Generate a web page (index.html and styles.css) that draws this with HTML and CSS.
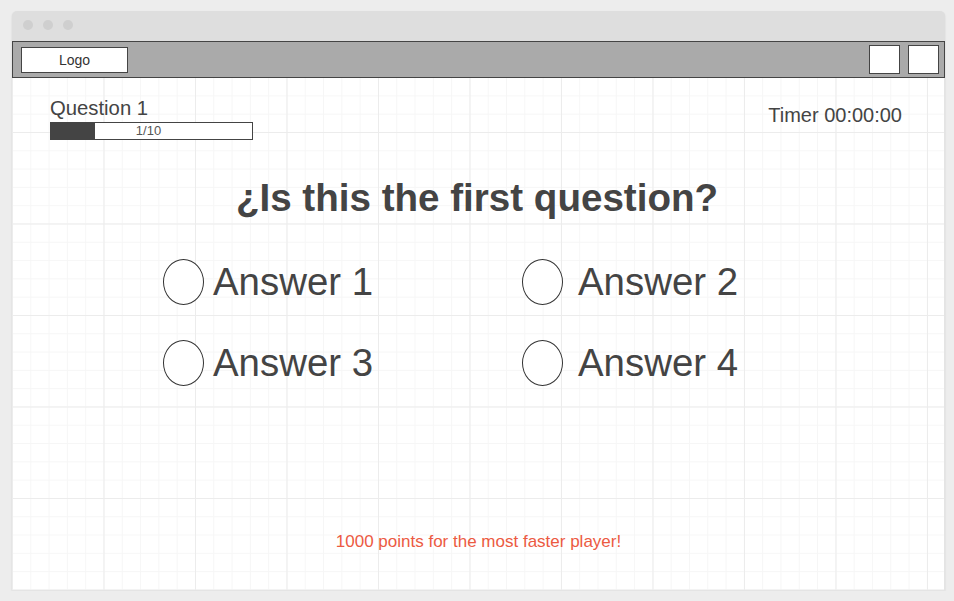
FILE: index.html
```html
<!DOCTYPE html>
<html lang="en">
<head>
<meta charset="utf-8">
<title>Quiz wireframe</title>
<link rel="stylesheet" href="styles.css">
</head>
<body>
<div class="window">
  <div class="titlebar">
    <span class="dot"></span><span class="dot"></span><span class="dot"></span>
  </div>
  <div class="navbar">
    <div class="logo">Logo</div>
    <div class="nav-actions">
      <div class="nav-box"></div>
      <div class="nav-box"></div>
    </div>
  </div>
  <div class="content">
    <div class="header">
      <div class="question-info">
        <div class="question-label">Question 1</div>
        <div class="progress">
          <div class="progress-fill" style="width: 22%"></div>
          <span class="progress-text">1/10</span>
        </div>
      </div>
      <div class="timer">Timer 00:00:00</div>
    </div>
    <h1 class="title">¿Is this the first question?</h1>
    <div class="answers">
      <div class="answer"><span class="radio"></span><span class="answer-label">Answer 1</span></div>
      <div class="answer answer-right"><span class="radio"></span><span class="answer-label">Answer 2</span></div>
      <div class="answer"><span class="radio"></span><span class="answer-label">Answer 3</span></div>
      <div class="answer answer-right"><span class="radio"></span><span class="answer-label">Answer 4</span></div>
    </div>
    <div class="footer">1000 points for the most faster player!</div>
  </div>
</div>
</body>
</html>
```
FILE: styles.css
```css
* { box-sizing: border-box; }
html, body { margin: 0; padding: 0; }
body {
  background: #ededed;
  font-family: "Liberation Sans", Arial, sans-serif;
  color: #444;
}
.window {
  margin: 11px 0 0 12px;
  width: 933px;
  height: 580px;
  background: #dedede;
  border-radius: 5px 5px 0 0;
  box-shadow: 0 1px 2px rgba(0,0,0,0.12);
  display: flex;
  flex-direction: column;
}
.titlebar {
  height: 30px;
  display: flex;
  align-items: flex-start;
  gap: 10px;
  padding: 9px 0 0 11px;
}
.dot {
  width: 10px;
  height: 10px;
  border-radius: 50%;
  background: #cfcfcf;
}
.navbar {
  height: 37px;
  background: #aaaaaa;
  border: 1px solid #444;
  display: flex;
  align-items: center;
  justify-content: space-between;
  padding: 0 5px 0 8px;
}
.logo {
  width: 107px;
  height: 26px;
  background: #fff;
  border: 1px solid #444;
  font-size: 14px;
  line-height: 24px;
  text-align: center;
  color: #333;
}
.nav-actions { display: flex; gap: 8px; }
.nav-box {
  width: 31px;
  height: 29px;
  background: #fff;
  border: 1px solid #444;
}
.content {
  flex: 1;
  display: flex;
  flex-direction: column;
  background-color: #fff;
  background-image:
    linear-gradient(to right, #ececec 1px, transparent 1px),
    linear-gradient(to bottom, #ececec 1px, transparent 1px),
    linear-gradient(to right, #f6f6f6 1px, transparent 1px),
    linear-gradient(to bottom, #f6f6f6 1px, transparent 1px);
  background-size: 91.5px 91.5px, 91.5px 91.5px, 18.3px 18.3px, 18.3px 18.3px;
  background-position: 0 54px, 0 54px, 0 54px, 0 54px;
  box-shadow: inset -1px 0 0 #e4e4e4, inset 0 -1px 0 #e4e4e4;
}
.header {
  display: flex;
  justify-content: space-between;
  align-items: flex-start;
  padding: 20px 43px 0 38px;
}
.question-label {
  font-size: 20.3px;
  line-height: 20px;
}
.progress {
  position: relative;
  margin-top: 4px;
  width: 203px;
  height: 18px;
  border: 1px solid #444;
  background: #fff;
}
.progress-fill {
  height: 100%;
  background: #444;
}
.progress-text {
  position: absolute;
  left: 0;
  right: 6px;
  top: 0;
  text-align: center;
  font-size: 13px;
  line-height: 16px;
  color: #555;
}
.timer {
  margin-top: 7px;
  font-size: 20px;
  line-height: 20px;
}
.title {
  margin: 38px 0 0;
  font-size: 38.6px;
  line-height: 39px;
  font-weight: bold;
  text-align: center;
  padding-right: 3px;
}
.answers {
  margin-top: 42px;
  padding-left: 151px;
  display: grid;
  grid-template-columns: 359px 359px;
  row-gap: 35px;
}
.answer {
  display: flex;
  align-items: center;
  height: 46px;
}
.radio {
  width: 41px;
  height: 46px;
  border: 1px solid #333;
  border-radius: 50%;
  background: #fff;
  flex: none;
}
.answer-label {
  margin-left: 9px;
  font-size: 38.4px;
  line-height: 46px;
}
.answer-right .answer-label { margin-left: 15px; }
.footer {
  margin-top: auto;
  padding-bottom: 41px;
  text-align: center;
  font-size: 17px;
  line-height: 17px;
  color: #ec5a42;
}
```
